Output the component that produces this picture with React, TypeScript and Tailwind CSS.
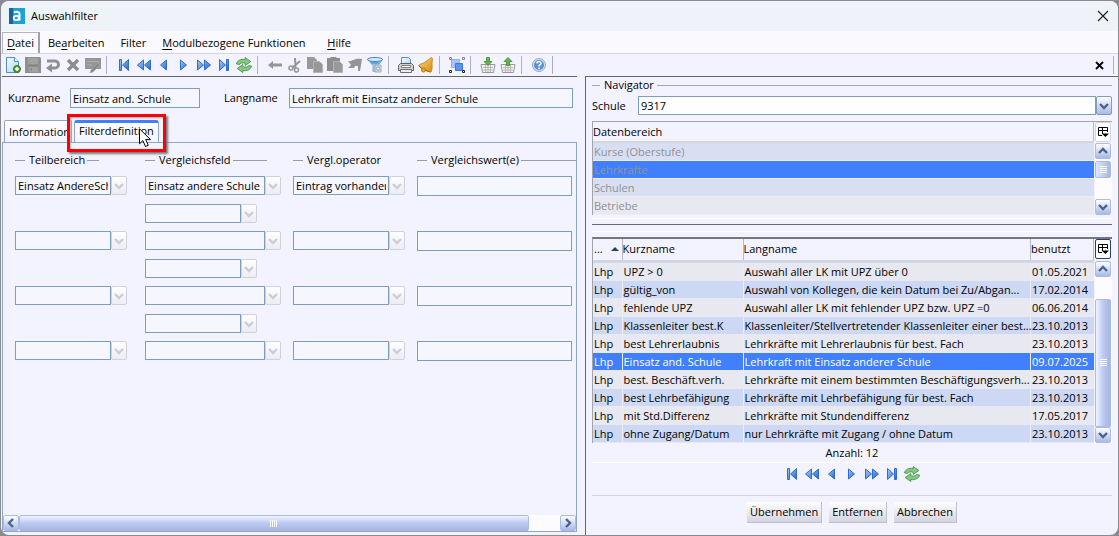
import { useState, type ReactNode } from "react";

type FilterRow = { bereich: string; feld: string; operator: string; sub: boolean };

const filterRows: FilterRow[] = [
  { bereich: "Einsatz AndereSchule", feld: "Einsatz andere Schule", operator: "Eintrag vorhanden", sub: true },
  { bereich: "", feld: "", operator: "", sub: true },
  { bereich: "", feld: "", operator: "", sub: true },
  { bereich: "", feld: "", operator: "", sub: false },
];

const datenbereiche = ["Kurse (Oberstufe)", "Lehrkräfte", "Schulen", "Betriebe"];

const filters = [
  ["UPZ > 0", "Auswahl aller LK mit UPZ über 0", "01.05.2021"],
  ["gültig_von", "Auswahl von Kollegen, die kein Datum bei Zu/Abgan...", "17.02.2014"],
  ["fehlende UPZ", "Auswahl aller LK mit fehlender UPZ bzw. UPZ =0", "06.06.2014"],
  ["Klassenleiter best.K", "Klassenleiter/Stellvertretender Klassenleiter einer best...", "23.10.2013"],
  ["best Lehrerlaubnis", "Lehrkräfte mit Lehrerlaubnis für best. Fach", "23.10.2013"],
  ["Einsatz and. Schule", "Lehrkraft mit Einsatz anderer Schule", "09.07.2025"],
  ["best. Beschäft.verh.", "Lehrkräfte mit einem bestimmten Beschäftigungsverh...", "23.10.2013"],
  ["best Lehrbefähigung", "Lehrkräfte mit Lehrbefähigung für best. Fach", "23.10.2013"],
  ["mit Std.Differenz", "Lehrkräfte mit Stundendifferenz", "17.05.2017"],
  ["ohne Zugang/Datum", "nur Lehrkräfte mit Zugang / ohne Datum", "23.10.2013"],
];

/* ---------- icons ---------- */

function Icon({ children }: { children: ReactNode }) {
  return (
    <svg width="16" height="16" viewBox="0 0 16 16" fill="none" aria-hidden="true">
      {children}
    </svg>
  );
}

function Gradients() {
  return (
    <svg width="0" height="0" className="absolute" aria-hidden="true">
      <defs>
        <linearGradient id="blue" x1="0" y1="0" x2="1" y2="1">
          <stop offset="0" stopColor="#a9cdf8" />
          <stop offset="1" stopColor="#1f62d0" />
        </linearGradient>
        <linearGradient id="gold" x1="0" y1="0" x2="1" y2="1">
          <stop offset="0" stopColor="#fbd678" />
          <stop offset="1" stopColor="#d98a18" />
        </linearGradient>
        <linearGradient id="page" x1="0" y1="0" x2="1" y2="1">
          <stop offset="0" stopColor="#ffffff" />
          <stop offset="1" stopColor="#a9d2f5" />
        </linearGradient>
      </defs>
    </svg>
  );
}

const blue = { fill: "url(#blue)", stroke: "#2d6cd0", strokeWidth: 1, strokeLinejoin: "round" as const };

const FirstIcon = () => (
  <Icon>
    <path d="M3.5 2.5h2v11h-2zM12.5 2.5v11L6.5 8z" {...blue} />
  </Icon>
);
const RewindIcon = () => (
  <Icon>
    <path d="M7.5 3v10L1.5 8zM14.5 3v10L8.5 8z" {...blue} />
  </Icon>
);
const PrevIcon = () => (
  <Icon>
    <path d="M10.5 3v10L4.5 8z" {...blue} />
  </Icon>
);
const NextIcon = () => (
  <Icon>
    <path d="M4.5 3v10l6-5z" {...blue} />
  </Icon>
);
const ForwardIcon = () => (
  <Icon>
    <path d="M1.5 3v10l6-5zM8.5 3v10l6-5z" {...blue} />
  </Icon>
);
const LastIcon = () => (
  <Icon>
    <path d="M3.5 2.5v11l6-5.5zM10.5 2.5h2v11h-2z" {...blue} />
  </Icon>
);
const RefreshIcon = () => (
  <Icon>
    <path
      d="M.5 7C1 3.500 5 1.800 9.200 2.500V.5l5.600 4-5.600 4V6.300C6.500 5.500 4.500 5.800 3.600 7.500z"
      fill="#84c884"
      stroke="#3c8c40"
      strokeWidth=".8"
    />
    <path
      d="M15.500 9C15 12.500 11 14.200 6.800 13.500v2l-5.600-4 5.600-4v2.200c2.700.8 4.700.5 5.600-1.200z"
      fill="#84c884"
      stroke="#3c8c40"
      strokeWidth=".8"
    />
  </Icon>
);
const NewIcon = () => (
  <Icon>
    <path d="M1.500.5h8l4 4v11h-12z" fill="url(#page)" stroke="#4d8fd0" />
    <path d="M9.500.5v4h4" fill="#fff" stroke="#4d8fd0" />
    <circle cx="12" cy="12" r="3.500" fill="#5c9a35" stroke="#3a7a1e" />
    <path d="M12 10v4M10 12h4" stroke="#fff" strokeWidth="1.500" />
  </Icon>
);
const SaveIcon = () => (
  <Icon>
    <path d="M0 0h15l1 1v15H0z" fill="#909090" />
    <path d="M3 1h10v6H3zM4 10h9v5H4z" fill="#a2a2a2" />
    <path d="M3 8.500h10M6 11v3" stroke="#808080" />
  </Icon>
);
const UndoIcon = () => (
  <Icon>
    <path d="M2 4h8a3.500 3.500 0 0 1 0 7H6" stroke="#909090" strokeWidth="3" />
    <path d="M7 6.500v9L1 11z" fill="#909090" />
  </Icon>
);
const DeleteIcon = () => (
  <Icon>
    <path d="M3 3l10 10M13 3L3 13" stroke="#8c8c8c" strokeWidth="3.400" />
  </Icon>
);
const EditIcon = () => (
  <Icon>
    <path d="M0 1h16v11h-6l-3 3v-3H0z" fill="#969696" />
    <path d="M2 4.500h12M2 8h5" stroke="#b0b0b0" />
    <path d="M6 13l7-7 2 2-7 7-3 1z" fill="#8a8a8a" stroke="#aaa" strokeWidth=".5" />
  </Icon>
);
const BackIcon = () => (
  <Icon>
    <path d="M1 8l5-4v2.500h9v3H6V12z" fill="#969696" />
  </Icon>
);
const CutIcon = () => (
  <Icon>
    <path d="M8 1L8.500 11M13 4L5 11" stroke="#969696" strokeWidth="2" />
    <circle cx="4" cy="11" r="2" stroke="#969696" strokeWidth="1.500" />
    <circle cx="9.500" cy="13" r="2" stroke="#969696" strokeWidth="1.500" />
  </Icon>
);
const CopyIcon = () => (
  <Icon>
    <path d="M0 0h7l3 3v9H0z" fill="#999" />
    <path d="M6.500 4.500h6l3 3v8h-9z" fill="#989898" stroke="#b4b4b4" />
  </Icon>
);
const PasteIcon = () => (
  <Icon>
    <path d="M0 1h3l1-1h5l1 1h3v13H0z" fill="#8e8e8e" />
    <path d="M6.500 4.500h6l3 3v8h-9z" fill="#9a9a9a" stroke="#b4b4b4" />
  </Icon>
);
const FlagIcon = () => (
  <Icon>
    <path d="M1 4c4 1 6-3 14-2l-2 12h-2V9H8l-1 2H1l3-3z" fill="#959595" />
  </Icon>
);
const FunnelIcon = () => (
  <Icon>
    <path d="M.5 2.500l5.500 6v6h5v-6l4.500-6z" fill="#8ec4ee" stroke="#7fb4e0" />
    <ellipse cx="8" cy="2.500" rx="7.500" ry="2" fill="#d5ebfb" stroke="#3f84c4" />
    <path d="M4 6h8" stroke="#3f84c4" />
    <path d="M8 8h6v7H8z" fill="#cfd3da" stroke="#a8b0bc" />
    <circle cx="11" cy="11.500" r="1.500" fill="#fff" stroke="#98a2b0" />
  </Icon>
);
const PrintIcon = () => (
  <Icon>
    <path d="M3.500.5h7l2 2v6h-9z" fill="url(#page)" stroke="#5a8cbc" />
    <path d="M.5 8.500l2-2h11l2 2v5H.5z" fill="#d2d2d2" stroke="#606060" />
    <path d="M3.500 8.500h9v2h-9z" fill="#fff" stroke="#808080" />
    <path d="M2.500 12.500h11v3h-11z" fill="#eee" stroke="#707070" />
  </Icon>
);
const BellIcon = () => (
  <Icon>
    <path
      d="M12 1.500C13 0 15 .5 14.500 2.500c-.5 2-.5 3-.5 5.500s.500 4-1 7C9 14.500 3 11.500.5 8.500 2.500 6.500 6 6.500 8 4.500S11 2.500 12 1.500z"
      fill="url(#gold)"
      stroke="#c98a1c"
    />
    <path d="M1 9c3 3 7 5 11.500 6" stroke="#a86808" />
    <circle cx="5.500" cy="13" r="2" fill="#eba936" stroke="#b87410" />
  </Icon>
);
const SelectionIcon = () => (
  <Icon>
    <path d="M2.500 2.500h8v8h-8z" fill="#a9c4f6" stroke="#8fb0ec" />
    <path d="M6.500 6.500h7v7h-7z" fill="#5e94ee" stroke="#3c78dc" />
    <path d="M.5.5h2v2h-2zM13.500.5h2v2h-2z" stroke="#888" />
    <path d="M.5 13.500h2v2h-2zM13.500 13.500h2v2h-2z" stroke="#222" />
  </Icon>
);
function BasketIcon({ up }: { up?: boolean }) {
  return (
    <Icon>
      <path d="M1 7.500h14l-1.500 8h-11z" fill="#f2f2f2" stroke="#9a9a9a" />
      <path d="M3 10.500h10M3 13h10M5.500 8v7M8 8v7M10.500 8v7" stroke="#b8b8b8" />
      {up ? (
        <path d="M8 .5l4 4H9.500v4h-3v-4H4z" fill="#62b548" stroke="#3a8a2a" strokeWidth=".8" />
      ) : (
        <path d="M6.500.5h3v4H12l-4 4-4-4h2.500z" fill="#62b548" stroke="#3a8a2a" strokeWidth=".8" />
      )}
    </Icon>
  );
}
const HelpIcon = () => (
  <Icon>
    <circle cx="8" cy="8" r="6.500" fill="#d3e1f4" stroke="#86a9d6" />
    <circle cx="8" cy="8" r="5" fill="#5c90d0" />
    <path d="M6 6.500C6 4 10 4 10 6.300 10 8 8 7.500 8 9.500M8 10.500V12" stroke="#fff" strokeWidth="1.500" />
  </Icon>
);

function Chevron({ dir = "down" }: { dir?: "down" | "up" | "left" | "right" }) {
  const d = {
    down: "M1 3l4 4 4-4",
    up: "M1 7l4-4 4 4",
    left: "M7 1L3 5l4 4",
    right: "M3 1l4 4-4 4",
  }[dir];
  return (
    <svg width="10" height="10" viewBox="0 0 10 10" fill="none" aria-hidden="true">
      <path d={d} stroke="currentColor" strokeWidth="2.400" />
    </svg>
  );
}

const ColumnsIcon = () => (
  <svg width="11" height="12" viewBox="0 0 11 12" fill="none" aria-hidden="true">
    <path d="M4 9.500H.5v-8h9V6M.5 4.500h9M4.500 2v6" stroke="#000" />
    <path d="M3.500 7.500H11L7.500 11z" fill="#000" />
  </svg>
);

/* ---------- controls ---------- */

function ToolButton({ label, children }: { label: string; children: ReactNode }) {
  return (
    <button type="button" aria-label={label} className="flex h-5 w-5 shrink-0 items-center justify-center">
      {children}
    </button>
  );
}

const ToolSeparator = () => <span className="mr-[7px] ml-[3px] h-[18px] w-px bg-[#b0b0b8]" />;

function NavigationButtons() {
  return (
    <>
      <ToolButton label="Erster Satz"><FirstIcon /></ToolButton>
      <ToolButton label="Zurückblättern"><RewindIcon /></ToolButton>
      <ToolButton label="Vorheriger Satz"><PrevIcon /></ToolButton>
      <ToolButton label="Nächster Satz"><NextIcon /></ToolButton>
      <ToolButton label="Vorblättern"><ForwardIcon /></ToolButton>
      <ToolButton label="Letzter Satz"><LastIcon /></ToolButton>
      <ToolButton label="Aktualisieren"><RefreshIcon /></ToolButton>
    </>
  );
}

function Combo({ label, value, wide }: { label: string; value: string; wide?: boolean }) {
  return (
    <div className="flex">
      <select
        aria-label={label}
        defaultValue={value}
        className={`h-[19px] appearance-none border border-[#7f9dbd] bg-[#f6f6ff] px-[2px] ${wide ? "w-[120px]" : "w-24"}`}
      >
        <option>{value}</option>
      </select>
      <span className="flex h-[19px] w-4 items-center justify-center rounded-[2px] border border-[#d0d0de] bg-linear-to-b from-white to-[#ececf2] text-[#ccccda]">
        <Chevron />
      </span>
    </div>
  );
}

function ColumnTitle({ title, line }: { title: string; line: string }) {
  return (
    <div className="flex items-center">
      <span className="mr-1 h-px w-[10px] bg-[#9a9aa8]" />
      <span>{title}</span>
      <span className={`ml-[2px] h-px bg-[#9a9aa8] ${line}`} />
    </div>
  );
}

function ScrollButton({ dir, label }: { dir: "up" | "down" | "left" | "right"; label: string }) {
  return (
    <button
      type="button"
      aria-label={label}
      className="flex h-4 w-4 shrink-0 items-center justify-center rounded-[2px] border border-[#a9bce4] bg-linear-to-b from-white to-[#a9b9e6] text-[#4a648c]"
    >
      <Chevron dir={dir} />
    </button>
  );
}

function Grip({ vertical }: { vertical?: boolean }) {
  const line = vertical ? "h-px w-[7px] bg-white" : "h-[7px] w-px bg-white";
  return (
    <span className={`flex gap-px ${vertical ? "flex-col" : ""}`}>
      <i className={line} />
      <i className={line} />
      <i className={line} />
      <i className={line} />
    </span>
  );
}

function ActionButton({ children }: { children: ReactNode }) {
  return (
    <button
      type="button"
      className="h-[21px] border-r border-b border-[#c0c0cc] bg-linear-to-b from-white to-[#d4d4e0] px-[3px]"
    >
      {children}
    </button>
  );
}

/* ---------- window parts ---------- */

function TitleBar() {
  return (
    <header className="flex h-[30px] items-center bg-[#edf3f9] pr-[9px] pl-2">
      <svg width="16" height="16" viewBox="0 0 16 16" className="mr-[6px]" aria-hidden="true">
        <path d="M0 0h16v16H0z" fill="#1ba1d6" />
        <path d="M0 0h4v16H0z" fill="#17659c" />
        <path d="M5 4.500c2-1 5.500-1 5.500 1.500v6.500" fill="none" stroke="#fff" strokeWidth="2" />
        <ellipse cx="7.300" cy="10" rx="2.600" ry="2.200" fill="none" stroke="#fff" strokeWidth="1.800" />
      </svg>
      <h1>Auswahlfilter</h1>
      <button type="button" aria-label="Schließen" className="ml-auto">
        <svg width="12" height="12" viewBox="0 0 12 12" aria-hidden="true">
          <path d="M1 1l10 10M11 1L1 11" stroke="#222" strokeWidth="1.200" />
        </svg>
      </button>
    </header>
  );
}

function MenuBar() {
  return (
    <nav className="flex h-[23px] border-b border-[#d4d4e4] bg-[#f9f9fe] pt-px pl-px">
      <button type="button" className="h-[21px] border-t border-r-2 border-l border-t-[#b4b4c4] border-r-[#a0a0a8] border-l-[#b4b4c4] px-1">
        <u className="underline-offset-2">D</u>atei
      </button>
      <button type="button" className="h-[21px] px-2 pt-px">Be<u className="underline-offset-2">a</u>rbeiten</button>
      <button type="button" className="h-[21px] px-2 pt-px">Filter</button>
      <button type="button" className="h-[21px] w-[165px] px-2 pt-px text-left whitespace-nowrap">
        <u className="underline-offset-2">M</u>odulbezogene Funktionen
      </button>
      <button type="button" className="h-[21px] px-2 pt-px"><u className="underline-offset-2">H</u>ilfe</button>
    </nav>
  );
}

function Toolbar() {
  return (
    <div className="flex h-[22px] items-center pl-[2px]">
      <ToolButton label="Neu"><NewIcon /></ToolButton>
      <ToolButton label="Speichern"><SaveIcon /></ToolButton>
      <ToolButton label="Rückgängig"><UndoIcon /></ToolButton>
      <ToolButton label="Löschen"><DeleteIcon /></ToolButton>
      <ToolButton label="Bearbeiten"><EditIcon /></ToolButton>
      <ToolSeparator />
      <NavigationButtons />
      <ToolSeparator />
      <ToolButton label="Zurück"><BackIcon /></ToolButton>
      <ToolButton label="Ausschneiden"><CutIcon /></ToolButton>
      <ToolButton label="Kopieren"><CopyIcon /></ToolButton>
      <ToolButton label="Einfügen"><PasteIcon /></ToolButton>
      <ToolButton label="Markieren"><FlagIcon /></ToolButton>
      <ToolButton label="Filter"><FunnelIcon /></ToolButton>
      <ToolSeparator />
      <ToolButton label="Drucken"><PrintIcon /></ToolButton>
      <ToolButton label="Erinnerung"><BellIcon /></ToolButton>
      <ToolSeparator />
      <ToolButton label="Auswahl"><SelectionIcon /></ToolButton>
      <ToolSeparator />
      <ToolButton label="Import"><BasketIcon /></ToolButton>
      <ToolButton label="Export"><BasketIcon up /></ToolButton>
      <ToolSeparator />
      <ToolButton label="Hilfe"><HelpIcon /></ToolButton>
      <ToolSeparator />
      <button type="button" aria-label="Modul schließen" className="mr-[9px] ml-auto">
        <svg width="9" height="9" viewBox="0 0 9 9" aria-hidden="true">
          <path d="M1 1l7 7M8 1L1 8" stroke="#000" strokeWidth="1.800" />
        </svg>
      </button>
      <span className="mr-1 h-[18px] w-px bg-[#b0b0b8]" />
    </div>
  );
}

function FilterTabs() {
  return (
    <div role="tablist" className="flex items-end pl-[2px]">
      <button
        role="tab"
        type="button"
        aria-selected="false"
        className="h-[22px] w-[68px] overflow-hidden rounded-t-[2px] border border-b-0 border-[#8fa6c6] bg-linear-to-b from-white to-[#f3f3ff] pl-1 text-left whitespace-nowrap"
      >
        Information
      </button>
      <div className="relative ml-[2px]">
        <button
          role="tab"
          type="button"
          aria-selected="true"
          className="block h-[22px] w-[85px] rounded-t-[3px] border border-t-3 border-b-0 border-[#8fa6c6] border-t-[#4080ff] bg-linear-to-b from-white to-[#f3f3ff] pb-1 pl-1 text-left whitespace-nowrap"
        >
          Filterdefinition
        </button>
        <div className="absolute -top-[6px] -left-[7px] h-[38px] w-[99px] border-3 border-[#fb0007] shadow-[2px_2px_2px_#777,inset_1px_1px_2px_#aaa]" />
        <svg width="14" height="20" viewBox="0 0 14 20" className="absolute top-2 left-[65px]" aria-hidden="true">
          <path d="M.5.800v15l3.400-3.200 2.600 5.900 2.800-1.200-2.600-5.700h4.800z" fill="#fff" stroke="#000" />
        </svg>
      </div>
    </div>
  );
}

function FilterPanel() {
  return (
    <section className="flex min-w-0 flex-col border-t border-[#66666c] pb-[3px]">
      <div className="flex items-center pt-[11px] pr-1 pl-[6px]">
        <label htmlFor="kurzname" className="w-[62px]">Kurzname</label>
        <input id="kurzname" defaultValue="Einsatz and. Schule" className="h-5 w-[130px] border border-[#7f9dbd] bg-[#f6f6ff] px-[2px]" />
        <label htmlFor="langname" className="ml-6 w-[65px]">Langname</label>
        <input id="langname" defaultValue="Lehrkraft mit Einsatz anderer Schule" className="h-5 min-w-0 flex-1 border border-[#7f9dbd] bg-[#f6f6ff] px-[2px]" />
      </div>
      <div className="pt-3">
        <FilterTabs />
      </div>
      <div role="tabpanel" className="flex flex-1 flex-col border border-[#8fa6c6]">
        <div className="grid grid-cols-[130px_148px_124px_minmax(0,1fr)] gap-y-2 pt-[9px] pl-3">
          <ColumnTitle title="Teilbereich" line="w-3" />
          <ColumnTitle title="Vergleichsfeld" line="w-[34px]" />
          <ColumnTitle title="Vergl.operator" line="w-0" />
          <ColumnTitle title="Vergleichswert(e)" line="flex-1" />
          {filterRows.map((row, i) => (
            <div key={i} className="col-span-4 grid grid-cols-subgrid items-start">
              <Combo label={`Teilbereich ${i + 1}`} value={row.bereich} />
              <div className="flex flex-col gap-[9px]">
                <Combo label={`Vergleichsfeld ${i + 1}`} value={row.feld} wide />
                {row.sub && <Combo label={`Unterfeld ${i + 1}`} value="" />}
              </div>
              <Combo label={`Vergleichsoperator ${i + 1}`} value={row.operator} />
              <div className="flex pr-1">
                <input aria-label={`Vergleichswert ${i + 1}`} className="h-5 min-w-0 flex-1 border border-[#7f9dbd] bg-[#f6f6ff]" />
              </div>
            </div>
          ))}
        </div>
        <div className="mt-auto flex h-4 bg-[#fcfcff]">
          <ScrollButton dir="left" label="Nach links" />
          <div className="flex w-[89%] items-center justify-center rounded-[2px] border border-[#a9bce4] bg-linear-to-b from-[#f0f4ff] via-[#bccaf6] to-[#a9b6dc]">
            <Grip />
          </div>
          <span className="ml-auto">
            <ScrollButton dir="right" label="Nach rechts" />
          </span>
        </div>
      </div>
    </section>
  );
}

function ColumnButton({ active }: { active?: boolean }) {
  return (
    <button
      type="button"
      aria-label="Spalten auswählen"
      className={`flex h-5 w-4 items-center justify-center rounded-[2px] border bg-white ${active ? "border-[#23406e]" : "border-[#d4d4e0]"}`}
    >
      <ColumnsIcon />
    </button>
  );
}

function DataAreaTable() {
  return (
    <div className="mt-[6px] flex border-t border-l border-[#a4a4ac]">
      <table className="min-w-0 flex-1 table-fixed border-collapse">
        <thead>
          <tr className="h-5">
            <th className="border-r border-b-2 border-r-[#b8b8c4] border-b-[#d4d4dc] text-left font-normal">Datenbereich</th>
          </tr>
        </thead>
        <tbody>
          {datenbereiche.map((name) => (
            <tr
              key={name}
              className={`h-[18px] border-b border-[#ececf4] text-[#909094] ${
                name === "Lehrkräfte" ? "bg-[#4080ff]" : name === "Betriebe" ? "bg-[#e8e8f0]" : "bg-[#d9dff3]"
              }`}
            >
              <td className="pl-px leading-none">{name}</td>
            </tr>
          ))}
        </tbody>
      </table>
      <div className="ml-px flex w-[17px] flex-col">
        <ColumnButton />
        <div className="mt-px flex flex-1 flex-col bg-[#fcfcff]">
          <ScrollButton dir="up" label="Nach oben" />
          <div className="mt-[2px] flex h-[17px] w-4 items-center justify-center rounded-[2px] border border-[#a9bce4] bg-linear-to-r from-[#e0e8ff] to-[#a9b6dc]">
            <Grip vertical />
          </div>
          <span className="mt-auto">
            <ScrollButton dir="down" label="Nach unten" />
          </span>
        </div>
      </div>
    </div>
  );
}

function FilterTable() {
  const [selected, setSelected] = useState(5);
  return (
    <div className="flex border-t-2 border-l border-t-[#77777c] border-l-[#a4a4ac]">
      <div className="min-w-0 flex-1">
        <table className="w-full table-fixed border-collapse">
          <colgroup>
            <col className="w-[29px]" />
            <col className="w-[121px]" />
            <col />
            <col className="w-[63px]" />
          </colgroup>
          <thead>
            <tr className="h-[22px] border-b-2 border-[#d4d4dc] text-left">
              <th className="border-r border-[#b8b8c4] pl-px font-normal">
                <span className="flex items-center justify-between pr-[3px]">
                  ...
                  <svg width="8" height="4" viewBox="0 0 8 4" aria-hidden="true">
                    <path d="M0 4l4-4 4 4z" fill="#24455c" />
                  </svg>
                </span>
              </th>
              <th className="border-r border-[#b8b8c4] font-normal">Kurzname</th>
              <th className="border-r border-[#b8b8c4] font-normal">Langname</th>
              <th className="border-r border-[#b8b8c4] font-normal">benutzt</th>
            </tr>
          </thead>
          <tbody>
            <tr className="h-[2px] bg-[#ccd8f4]">
              <td colSpan={4} />
            </tr>
            {filters.map(([kurz, lang, datum], i) => (
              <tr
                key={kurz}
                onClick={() => setSelected(i)}
                className={`h-[18px] border-b border-[#e8e8f2] ${
                  i === selected ? "bg-[#4080ff] text-white" : i % 2 ? "bg-[#ccd8f4]" : "bg-[#e8e8f0]"
                }`}
              >
                <td className="border-r border-[#ececf6] pl-px leading-none">Lhp</td>
                <td className="border-r border-[#ececf6] pl-px leading-none whitespace-nowrap">{kurz}</td>
                <td className="border-r border-[#ececf6] pl-px leading-none whitespace-nowrap">{lang}</td>
                <td className="pl-px leading-none">{datum}</td>
              </tr>
            ))}
          </tbody>
        </table>
      </div>
      <div className="ml-px flex w-[17px] flex-col">
        <ColumnButton active />
        <div className="mt-[2px] flex flex-1 flex-col bg-[#fcfcff]">
          <ScrollButton dir="up" label="Nach oben" />
          <div className="mt-[22px] flex w-4 flex-1 items-center justify-center rounded-t-[2px] border border-[#a9bce4] bg-linear-to-r from-[#f0f4ff] via-[#bccaf6] to-[#a9b6dc]">
            <Grip vertical />
          </div>
          <ScrollButton dir="down" label="Nach unten" />
        </div>
      </div>
    </div>
  );
}

function Navigator() {
  return (
    <section className="flex min-w-0 flex-col border-t border-l border-[#66666c] pr-[6px] pl-[6px]">
      <div className="flex h-4 items-center">
        <span className="mr-1 h-px w-2 bg-[#a4a4ac]" />
        <h2>Navigator</h2>
        <span className="ml-[3px] h-px flex-1 bg-[#a4a4ac]" />
      </div>
      <div className="mt-[3px] flex items-center">
        <label htmlFor="schule" className="w-[46px]">Schule</label>
        <select id="schule" className="h-[19px] min-w-0 flex-1 appearance-none border border-[#7f9dbd] bg-white pl-[2px]">
          <option>9317</option>
        </select>
        <span className="flex h-[19px] w-4 items-center justify-center rounded-[2px] border border-[#7f9dbd] bg-linear-to-b from-white to-[#a9b9e6] text-[#4a648c]">
          <Chevron />
        </span>
      </div>
      <DataAreaTable />
      <hr className="mt-[3px] border-white" />
      <hr className="mt-[5px] border-[#66666c]" />
      <hr className="mt-[6px] border-white" />
      <div className="mt-[5px]">
        <FilterTable />
      </div>
      <p className="flex h-5 items-center justify-center border-b border-white">Anzahl: 12</p>
      <div className="flex h-[33px] justify-center border-b border-[#d4d4e4] pt-px">
        <NavigationButtons />
      </div>
      <div className="flex justify-center gap-[7px] pt-[6px]">
        <ActionButton>Übernehmen</ActionButton>
        <ActionButton>Entfernen</ActionButton>
        <ActionButton>Abbrechen</ActionButton>
      </div>
    </section>
  );
}

export default function App() {
  return (
    <div className="flex min-h-screen flex-col bg-[#8a8a90] font-['Open_Sans','Noto_Sans',sans-serif] text-[11px] leading-4 text-black">
      <Gradients />
      <div className="m-px flex flex-1 flex-col overflow-hidden rounded-lg bg-[#f3f3ff]">
        <TitleBar />
        <MenuBar />
        <Toolbar />
        <main className="grid flex-1 grid-cols-[minmax(0,575fr)_minmax(0,533fr)] gap-2 pl-px">
          <FilterPanel />
          <Navigator />
        </main>
      </div>
    </div>
  );
}
